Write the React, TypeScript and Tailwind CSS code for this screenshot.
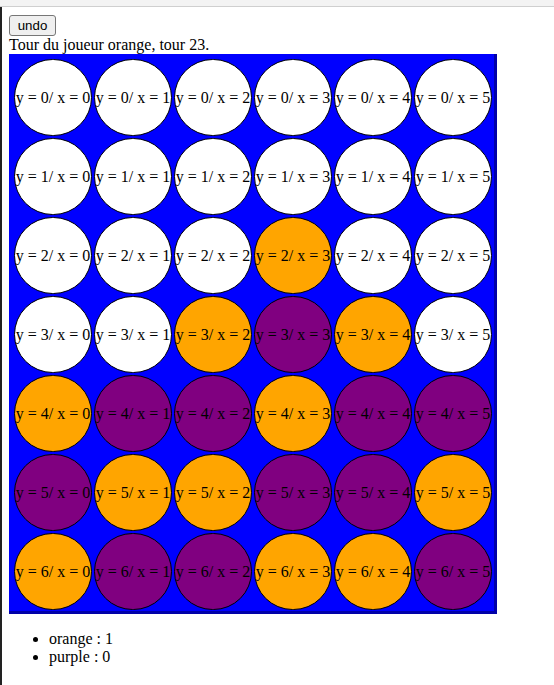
const board: string[][] = [
  ["w", "w", "w", "w", "w", "w"],
  ["w", "w", "w", "w", "w", "w"],
  ["w", "w", "w", "o", "w", "w"],
  ["w", "w", "o", "p", "o", "w"],
  ["o", "p", "p", "o", "p", "p"],
  ["p", "o", "o", "p", "p", "o"],
  ["o", "p", "p", "o", "o", "p"],
];

const colors: Record<string, string> = {
  w: "bg-white",
  o: "bg-[#ffa500]",
  p: "bg-[#800080]",
};

export default function App() {
  return (
    <div className="min-h-[685px] w-[554px] bg-white font-['Liberation_Serif',serif] text-[16px] leading-[18px] text-black">
      <div className="h-[7px] border-b border-[#cfcfcf] bg-[#f3f3f3]" />
      <div className="min-h-[678px] border-l-2 border-[#222] pl-[7px] pt-[8px]">
        <button className="block h-[21px] w-[47px] rounded-[3px] border border-[#767676] bg-[#efefef] font-['Liberation_Sans',sans-serif] text-[13.3px] leading-[15px] text-black">
          undo
        </button>
        <div className="h-[18px] leading-[18px]">Tour du joueur orange, tour 23.</div>
        <div className="w-[488px] border-r-[3px] border-b-[3px] border-[#0000a8] bg-[#0000ff] pl-[5px] pt-[5px] pb-[1px]">
          <div className="grid grid-cols-[repeat(6,78px)] gap-[2px]">
            {board.map((row, y) =>
              row.map((c, x) => (
                <div
                  key={`${y}-${x}`}
                  className={`flex h-[77px] w-[78px] items-center justify-center rounded-full border border-black ${colors[c]}`}
                >
                  <span className="whitespace-nowrap">
                    y = {y}/ x = {x}
                  </span>
                </div>
              ))
            )}
          </div>
        </div>
        <ul className="my-4 list-disc pl-10">
          <li>orange : 1</li>
          <li>purple : 0</li>
        </ul>
      </div>
    </div>
  );
}
